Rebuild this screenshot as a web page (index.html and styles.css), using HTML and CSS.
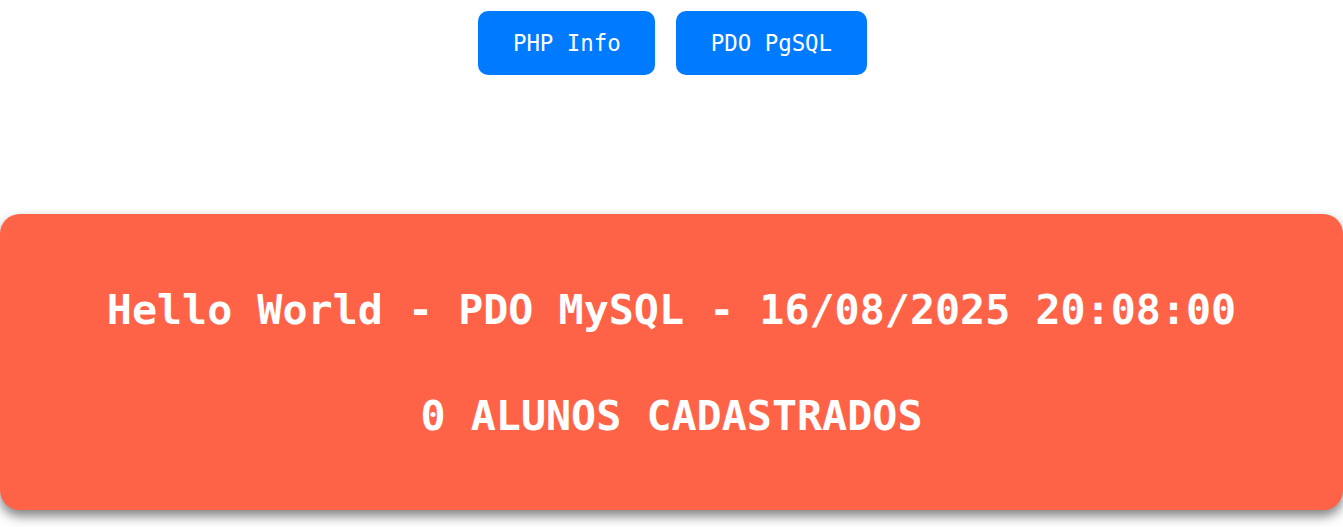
FILE: index.html
```html
<!DOCTYPE html>
<html lang="pt-BR">
<head>
<meta charset="utf-8">
<title>Hello World - PDO MySQL</title>
<link rel="stylesheet" href="styles.css">
</head>
<body>
  <nav class="nav">
    <a class="btn" href="#">PHP Info</a>
    <a class="btn" href="#">PDO PgSQL</a>
  </nav>
  <main class="banner">
    <h1 class="banner-title">Hello World - PDO MySQL - 16/08/2025 20:08:00</h1>
    <h1 class="banner-title">0 ALUNOS CADASTRADOS</h1>
  </main>
</body>
</html>
```
FILE: styles.css
```css
html, body {
  margin: 0;
  padding: 0;
  background: #ffffff;
}

body {
  font-family: "DejaVu Sans Mono", monospace;
  padding-bottom: 20px;
}

.nav {
  display: flex;
  justify-content: center;
  gap: 21px;
  padding-top: 11px;
  padding-left: 2px;
}

.btn {
  display: block;
  background: #007bff;
  color: #ffffff;
  text-decoration: none;
  font-size: 22.4px;
  line-height: 26px;
  padding: 19px 34.5px;
  border-radius: 10px;
}

.banner {
  margin-top: 139px;
  background: #ff6347;
  border-radius: 20px;
  box-shadow: 0 6px 12px rgba(0, 0, 0, 0.5);
  padding: 71px 0 70px;
  display: flex;
  flex-direction: column;
  align-items: center;
  gap: 57px;
}

.banner-title {
  margin: 0;
  color: #ffffff;
  font-size: 41.7px;
  line-height: 49px;
  font-weight: bold;
  text-align: center;
}
```
